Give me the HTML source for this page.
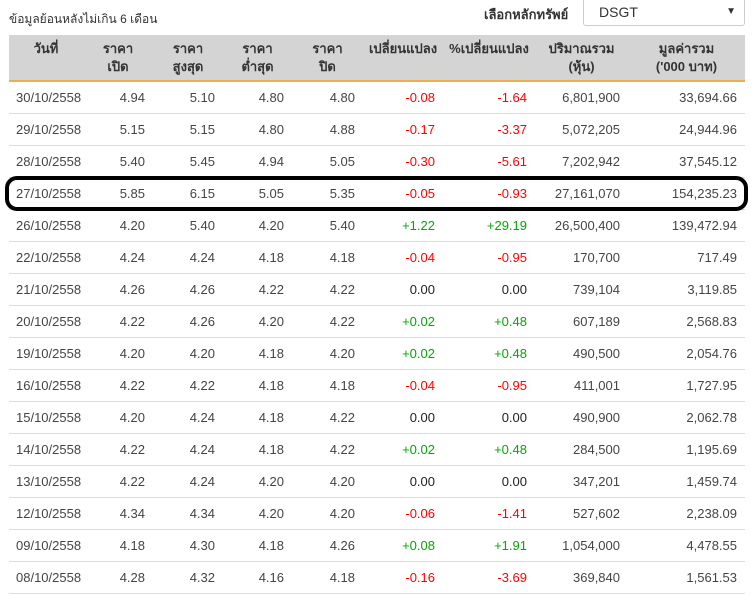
<!DOCTYPE html><html><head><meta charset="utf-8"><style>
body{margin:0;width:754px;height:590px;background:#fff;font-family:"Liberation Sans","Noto Sans CJK SC",sans-serif;font-size:13px;color:#444;position:relative;overflow:hidden}
.t{position:absolute;left:9px;top:35px;border-collapse:collapse;table-layout:fixed;width:736px}
.t th{background:#d4d4d4;font-weight:bold;color:#333;height:40px;box-sizing:content-box;vertical-align:top;padding:5px 0 0;line-height:18px;text-align:center;border-bottom:2px solid #f0ad4e;font-size:13px}
.t td{height:31px;border-bottom:1px solid #ddd;text-align:right;padding:0 8px 0 0;line-height:31px}
.t td:first-child{text-align:left;padding-left:7px}
.r{color:#f00}.g{color:#0a0}.z{color:#222}
</style></head><body>
<div style="position:absolute;left:9px;top:10px;font-size:12px;color:#333">ข้อมูลย้อนหลังไม่เกิน 6 เดือน</div>
<div style="position:absolute;left:484px;top:4px;font-weight:bold;color:#333">เลือกหลักทรัพย์</div>
<div style="position:absolute;left:583px;top:-2px;width:162px;height:28px;border:1px solid #ccc;border-radius:3px;box-sizing:border-box;padding-left:15px;line-height:26px;color:#333;font-size:14px">DSGT<span style="position:absolute;right:8px;font-size:10px">▼</span></div>
<table class="t"><colgroup><col style="width:74px"><col style="width:70px"><col style="width:70px"><col style="width:69px"><col style="width:71px"><col style="width:80px"><col style="width:92px"><col style="width:93px"><col style="width:117px"></colgroup>
<tr><th>วันที่</th><th>ราคา<br>เปิด</th><th>ราคา<br>สูงสุด</th><th>ราคา<br>ต่ำสุด</th><th>ราคา<br>ปิด</th><th>เปลี่ยนแปลง</th><th>%เปลี่ยนแปลง</th><th>ปริมาณรวม<br>(หุ้น)</th><th>มูลค่ารวม<br>('000 บาท)</th></tr>
<tr><td>30/10/2558</td><td>4.94</td><td>5.10</td><td>4.80</td><td>4.80</td><td class="r">-0.08</td><td class="r">-1.64</td><td>6,801,900</td><td>33,694.66</td></tr>
<tr><td>29/10/2558</td><td>5.15</td><td>5.15</td><td>4.80</td><td>4.88</td><td class="r">-0.17</td><td class="r">-3.37</td><td>5,072,205</td><td>24,944.96</td></tr>
<tr><td>28/10/2558</td><td>5.40</td><td>5.45</td><td>4.94</td><td>5.05</td><td class="r">-0.30</td><td class="r">-5.61</td><td>7,202,942</td><td>37,545.12</td></tr>
<tr><td>27/10/2558</td><td>5.85</td><td>6.15</td><td>5.05</td><td>5.35</td><td class="r">-0.05</td><td class="r">-0.93</td><td>27,161,070</td><td>154,235.23</td></tr>
<tr><td>26/10/2558</td><td>4.20</td><td>5.40</td><td>4.20</td><td>5.40</td><td class="g">+1.22</td><td class="g">+29.19</td><td>26,500,400</td><td>139,472.94</td></tr>
<tr><td>22/10/2558</td><td>4.24</td><td>4.24</td><td>4.18</td><td>4.18</td><td class="r">-0.04</td><td class="r">-0.95</td><td>170,700</td><td>717.49</td></tr>
<tr><td>21/10/2558</td><td>4.26</td><td>4.26</td><td>4.22</td><td>4.22</td><td class="z">0.00</td><td class="z">0.00</td><td>739,104</td><td>3,119.85</td></tr>
<tr><td>20/10/2558</td><td>4.22</td><td>4.26</td><td>4.20</td><td>4.22</td><td class="g">+0.02</td><td class="g">+0.48</td><td>607,189</td><td>2,568.83</td></tr>
<tr><td>19/10/2558</td><td>4.20</td><td>4.20</td><td>4.18</td><td>4.20</td><td class="g">+0.02</td><td class="g">+0.48</td><td>490,500</td><td>2,054.76</td></tr>
<tr><td>16/10/2558</td><td>4.22</td><td>4.22</td><td>4.18</td><td>4.18</td><td class="r">-0.04</td><td class="r">-0.95</td><td>411,001</td><td>1,727.95</td></tr>
<tr><td>15/10/2558</td><td>4.20</td><td>4.24</td><td>4.18</td><td>4.22</td><td class="z">0.00</td><td class="z">0.00</td><td>490,900</td><td>2,062.78</td></tr>
<tr><td>14/10/2558</td><td>4.22</td><td>4.24</td><td>4.18</td><td>4.22</td><td class="g">+0.02</td><td class="g">+0.48</td><td>284,500</td><td>1,195.69</td></tr>
<tr><td>13/10/2558</td><td>4.22</td><td>4.24</td><td>4.20</td><td>4.20</td><td class="z">0.00</td><td class="z">0.00</td><td>347,201</td><td>1,459.74</td></tr>
<tr><td>12/10/2558</td><td>4.34</td><td>4.34</td><td>4.20</td><td>4.20</td><td class="r">-0.06</td><td class="r">-1.41</td><td>527,602</td><td>2,238.09</td></tr>
<tr><td>09/10/2558</td><td>4.18</td><td>4.30</td><td>4.18</td><td>4.26</td><td class="g">+0.08</td><td class="g">+1.91</td><td>1,054,000</td><td>4,478.55</td></tr>
<tr><td>08/10/2558</td><td>4.28</td><td>4.32</td><td>4.16</td><td>4.18</td><td class="r">-0.16</td><td class="r">-3.69</td><td>369,840</td><td>1,561.53</td></tr>
</table>
<div style="position:absolute;left:5px;top:176px;width:743px;height:35px;border:4px solid #000;border-radius:12px;box-sizing:border-box"></div>
</body></html>
